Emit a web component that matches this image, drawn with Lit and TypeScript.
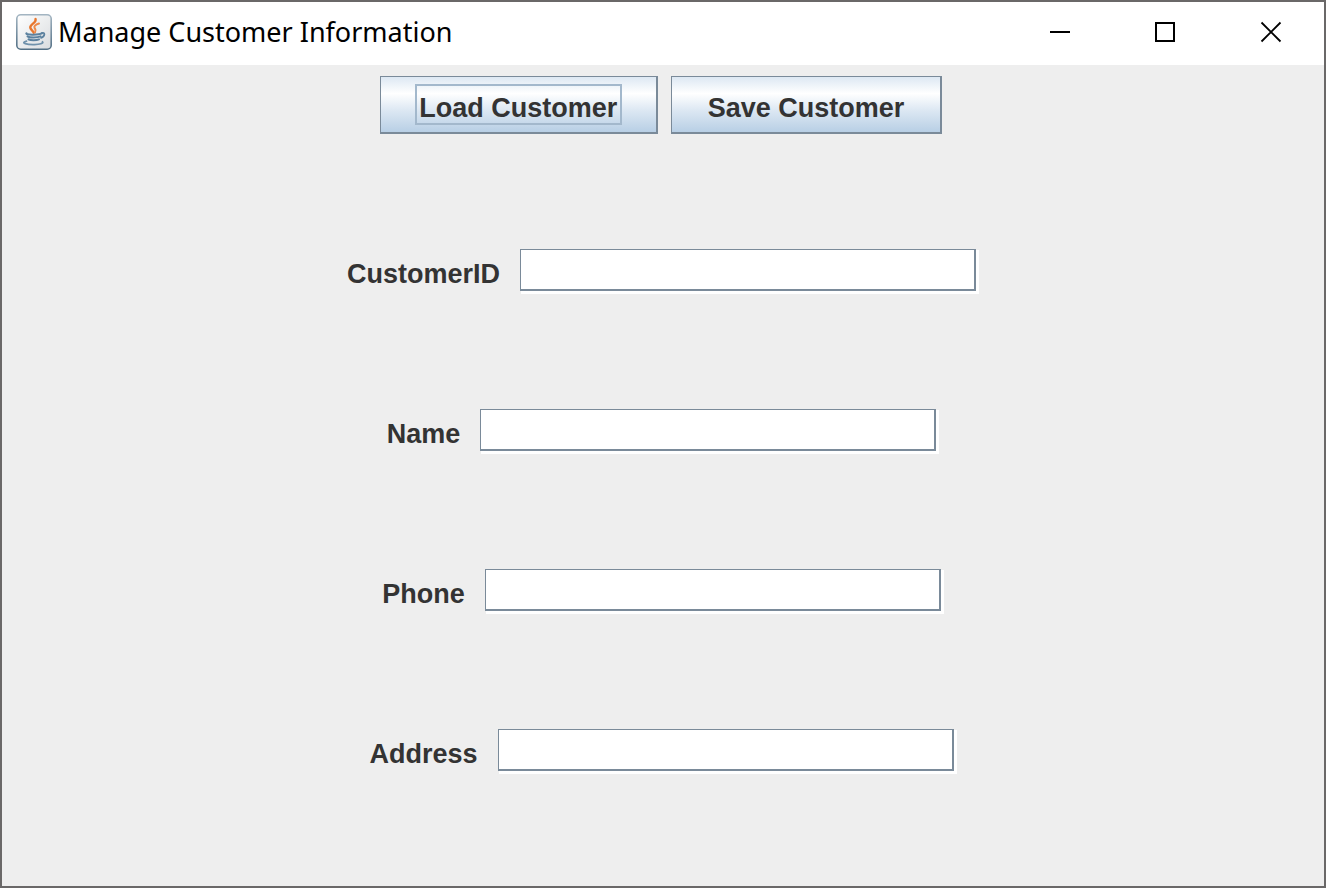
import { LitElement, html, css, svg } from "lit";
import { customElement } from "lit/decorators.js";

const javaIcon = svg`
  <svg class="logo" viewBox="0 0 36 36" aria-hidden="true">
    <defs>
      <linearGradient id="edge" x1="0" y1="0" x2="0" y2="1">
        <stop offset="0" stop-color="#a3b5c2" />
        <stop offset="1" stop-color="#526f85" />
      </linearGradient>
      <linearGradient id="face" x1="0" y1="0" x2="1" y2="1">
        <stop offset="0" stop-color="#ffffff" />
        <stop offset="1" stop-color="#d9dcdf" />
      </linearGradient>
    </defs>
    <rect x="0.8" y="0.8" width="34.4" height="34.4" rx="4" fill="url(#face)" stroke="url(#edge)" stroke-width="1.6" />
    <g fill="none" stroke-linecap="round">
      <path d="M19.500 5c1.500 4-6 5-5.200 8.800 .4 2 3 3 3.400 5" stroke="#e8772e" stroke-width="2.400" />
      <path d="M23 9.500c-3.500 1.200-5.300 2.500-4.500 4.300 .7 1.400 2 2.200 .6 4.400" stroke="#ee8a4a" stroke-width="2" />
      <path d="M10.500 19.200c-2 1.800 12 2 15.500 .2" stroke="#5b819f" stroke-width="2" />
      <path d="M11.500 22.400c2 1.400 10 1.400 13 0M12.500 25.400c2 1.200 8 1.200 10.500 0" stroke="#5b819f" stroke-width="2" />
      <path d="M25.500 19c4-1.200 3.800 3.300-.5 4.800" stroke="#5b819f" stroke-width="1.800" />
      <path d="M10.500 27.200c-7 2 1 3.600 8 3.400 5-.1 9.500-1.200 8-2.800" stroke="#6f91ab" stroke-width="1.800" />
    </g>
  </svg>
`;

const fields = [
  { id: "customer-id", label: "CustomerID" },
  { id: "name", label: "Name" },
  { id: "phone", label: "Phone" },
  { id: "address", label: "Address" },
];

@customElement("app-root")
export class AppRoot extends LitElement {
  static styles = css`
    :host {
      display: block;
      color: #333;
      font: bold 27px/32px "Liberation Sans", Arial, sans-serif;
    }
    .window {
      box-sizing: border-box;
      min-height: 100vh;
      display: flex;
      flex-direction: column;
      border: 2px solid #6a6868;
      background: #eee;
    }
    .titlebar {
      box-sizing: border-box;
      display: flex;
      align-items: center;
      height: 63px;
      padding: 0 0 3px 14px;
      background: #fff;
      color: #000;
    }
    .logo {
      width: 36px;
      height: 36px;
      margin-right: 6px;
    }
    .title {
      flex: 1;
      margin: 0;
      font: 27px/36px "Noto Sans", "Open Sans", sans-serif;
    }
    .caption {
      width: 106px;
      height: 60px;
      padding: 0;
      border: 0;
      background: none;
    }
    .caption svg {
      display: block;
      margin: auto;
    }
    .content {
      flex: 1;
      display: grid;
      grid-template-rows: 174px repeat(4, 1fr);
      padding-bottom: 7px;
    }
    .toolbar,
    .row {
      display: flex;
      justify-content: center;
      align-items: flex-start;
    }
    .toolbar {
      gap: 13px;
      padding: 11px 4px 0 0;
    }
    .row {
      gap: 20px;
      padding-top: 10px;
    }
    .action {
      box-sizing: border-box;
      height: 58px;
      padding: 0 34px;
      border: solid #7a8a99;
      border-width: 1px 2px 2px 1px;
      background: linear-gradient(#dde8f3, #fff 30%, #dde8f3 60%, #b8cfe5);
      color: inherit;
      font: inherit;
      white-space: nowrap;
    }
    .action span {
      display: block;
      box-sizing: border-box;
      height: 41px;
      padding-top: 6px;
      border: 2px solid transparent;
    }
    .action .focused {
      width: 207px;
      overflow: hidden;
      border-color: #a3b8cc;
    }
    .row label {
      padding-top: 9px;
    }
    .field {
      box-sizing: border-box;
      width: 456px;
      height: 42px;
      margin: 0 3px 0 0;
      padding: 0 4px;
      border: solid #7a8a99;
      border-width: 1px 2px 2px 1px;
      border-radius: 0;
      outline: none;
      background: #fff;
      box-shadow: 3px 3px 0 #fff, 1px 3px 0 #fff, 3px 1px 0 #fff;
      color: inherit;
      font: inherit;
    }
  `;

  render() {
    return html`
      <main class="window">
        <header class="titlebar">
          ${javaIcon}
          <h1 class="title">Manage Customer Information</h1>
          <button class="caption" aria-label="Minimize">
            <svg width="22" height="22" viewBox="0 0 22 22"><path d="M2 11h20" stroke="#000" stroke-width="2" /></svg>
          </button>
          <button class="caption" aria-label="Maximize">
            <svg width="22" height="22" viewBox="0 0 22 22"><path d="M2 2h18v18H2z" fill="none" stroke="#000" stroke-width="2" /></svg>
          </button>
          <button class="caption" aria-label="Close">
            <svg width="22" height="22" viewBox="0 0 22 22"><path d="M1.500 1.500l19 19M20.500 1.500l-19 19" stroke="#000" stroke-width="1.800" /></svg>
          </button>
        </header>
        <form class="content" @submit=${(e: Event) => e.preventDefault()}>
          <div class="toolbar">
            <button class="action" type="button"><span class="focused">Load Customer</span></button>
            <button class="action" type="button"><span>Save Customer</span></button>
          </div>
          ${fields.map(
            (f) => html`
              <div class="row">
                <label for=${f.id}>${f.label}</label>
                <input class="field" type="text" id=${f.id} name=${f.id} />
              </div>
            `
          )}
        </form>
      </main>
    `;
  }
}
